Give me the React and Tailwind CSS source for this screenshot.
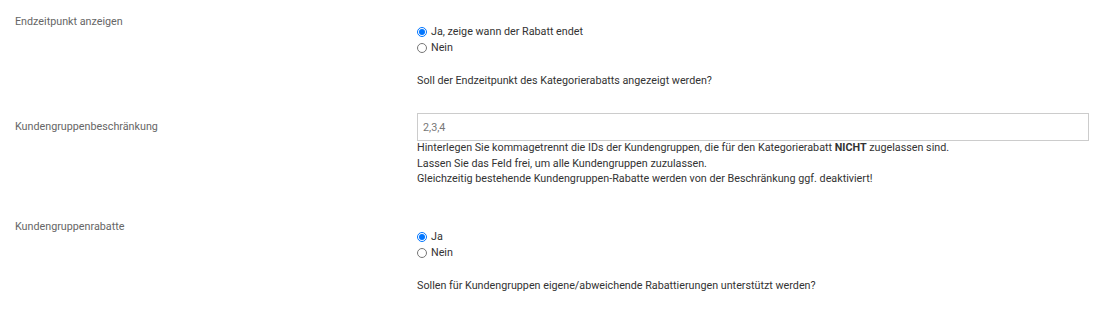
import React, { useState } from 'react';

const FONT = { fontFamily: 'Roboto, "Liberation Sans", sans-serif' };

function RadioGroup({ name, options, value, onChange }) {
  return (
    <div className="flex flex-col">
      {options.map((opt) => (
        <label key={opt.value} className="flex h-4 items-center gap-[4px] leading-4 text-[#333]">
          <input
            type="radio"
            name={name}
            value={opt.value}
            checked={value === opt.value}
            onChange={() => onChange(opt.value)}
            className="m-0 h-[10px] w-[10px] accent-[#0075ff]"
          />
          <span>{opt.label}</span>
        </label>
      ))}
    </div>
  );
}

function Row({ label, labelClass, className, children }) {
  return (
    <div className={`flex ${className}`}>
      <div className={`w-[417px] shrink-0 pl-[15px] leading-4 text-[#666] ${labelClass}`}>{label}</div>
      <div className="flex-1 pr-[17px]">{children}</div>
    </div>
  );
}

export default function App() {
  const [showEnd, setShowEnd] = useState('ja');
  const [groups, setGroups] = useState('2,3,4');
  const [groupDiscounts, setGroupDiscounts] = useState('ja');

  return (
    <div className="h-[333px] w-full bg-white text-[10.75px]" style={FONT}>
      <Row label="Endzeitpunkt anzeigen" className="pt-[14px]" labelClass="pt-0">
        <div className="pt-[10px]">
          <RadioGroup
            name="endzeit"
            value={showEnd}
            onChange={setShowEnd}
            options={[
              { value: 'ja', label: 'Ja, zeige wann der Rabatt endet' },
              { value: 'nein', label: 'Nein' },
            ]}
          />
          <p className="mt-[17px] leading-4 text-[#333]">Soll der Endzeitpunkt des Kategorierabatts angezeigt werden?</p>
        </div>
      </Row>

      <Row label="Kundengruppenbeschränkung" className="mt-[24px]" labelClass="pt-[6px]">
        <input
          type="text"
          value={groups}
          onChange={(e) => setGroups(e.target.value)}
          className="block h-[28px] w-full border border-[#ccc] px-[5px] text-[10.75px] text-[#777] outline-none"
        />
        <div className="-mt-[1px] leading-[15.6px] text-[#333]">
          <p>
            Hinterlegen Sie kommagetrennt die IDs der Kundengruppen, die für den Kategorierabatt <b>NICHT</b> zugelassen sind.
          </p>
          <p>Lassen Sie das Feld frei, um alle Kundengruppen zuzulassen.</p>
          <p>Gleichzeitig bestehende Kundengruppen-Rabatte werden von der Beschränkung ggf. deaktiviert!</p>
        </div>
      </Row>

      <Row label="Kundengruppenrabatte" className="mt-[32px]" labelClass="pt-0">
        <div className="pt-[10px]">
          <RadioGroup
            name="kgrabatte"
            value={groupDiscounts}
            onChange={setGroupDiscounts}
            options={[
              { value: 'ja', label: 'Ja' },
              { value: 'nein', label: 'Nein' },
            ]}
          />
          <p className="mt-[17px] leading-4 text-[#333]">Sollen für Kundengruppen eigene/abweichende Rabattierungen unterstützt werden?</p>
        </div>
      </Row>
    </div>
  );
}
